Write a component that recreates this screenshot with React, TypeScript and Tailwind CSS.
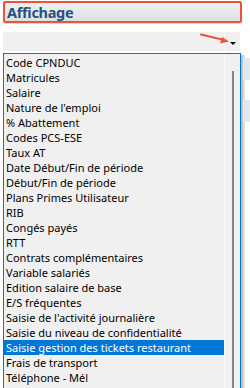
import React from "react";

const items = [
  "Code CPNDUC",
  "Matricules",
  "Salaire",
  "Nature de l'emploi",
  "% Abattement",
  "Codes PCS-ESE",
  "Taux AT",
  "Date Début/Fin de période",
  "Début/Fin de période",
  "Plans Primes Utilisateur",
  "RIB",
  "Congés payés",
  "RTT",
  "Contrats complémentaires",
  "Variable salariés",
  "Edition salaire de base",
  "E/S fréquentes",
  "Saisie de l'activité journalière",
  "Saisie du niveau de confidentialité",
  "Saisie gestion des tickets restaurant",
  "Frais de transport",
  "Téléphone - Mél",
];

export default function App() {
  return (
    <div
      className="relative w-[250px] h-[388px] overflow-hidden bg-white"
      style={{ fontFamily: '"Noto Sans", "Open Sans", sans-serif' }}
    >
      {/* background patches peeking at right */}
      <div className="absolute left-[243px] top-[58px] w-[7px] h-[22px] bg-[#e3e8ee]" />
      <div className="absolute left-[243px] top-[100px] w-[7px] h-[22px] bg-[#e3e8ee]" />

      <div className="flex flex-col pl-[3px] pt-[1px]">
        {/* Header */}
        <div className="w-[239px] h-[22px] border-2 border-[#e8553a] rounded-[2px] bg-gradient-to-b from-[#eef0f2] to-[#dde0e3] flex items-center pl-[2px] shadow-[0_1px_1px_rgba(0,0,0,0.15)]">
          <span className="text-[14.5px] font-bold text-[#24527f] leading-[18px] tracking-[-0.3px]">
            Affichage
          </span>
        </div>

        {/* Combo */}
        <div className="mt-[9px] w-[237px] h-[19px] bg-[#f0f0f0] flex">
          <div className="flex-1" />
          <div className="w-[16px] border-l border-[#fafafa] flex items-center justify-center pt-[3px]">
            <div className="w-0 h-0 border-l-[3px] border-r-[3px] border-t-[3px] border-l-transparent border-r-transparent border-t-black" />
          </div>
        </div>

        {/* List */}
        <div className="mt-[2px] flex">
          <div className="w-[238px] h-[340px] border border-[#0078d7] bg-[#f0f0f0] flex">
            <div className="w-[220px] pt-[1px] flex flex-col">
              {items.map((t, i) => {
                const sel = i === 19;
                return (
                  <div
                    key={t}
                    className={
                      "h-[15px] pl-[2px] text-[11px] leading-[15px] whitespace-nowrap " +
                      (sel ? "bg-[#0078d7] text-white" : "text-black")
                    }
                  >
                    {t}
                  </div>
                );
              })}
            </div>
            <div className="flex-1 border-l border-[#fbfbfb] flex justify-center pt-[17px]">
              <div className="w-[2px] h-full bg-[#858585] ml-[1px]" />
            </div>
          </div>
          <div className="w-[4px] h-[340px] mt-[2px] bg-gradient-to-r from-[#b4b4b4] to-[#ececec]" />
        </div>
      </div>

      {/* Red arrow annotation */}
      <svg
        className="absolute left-0 top-0"
        width="250"
        height="60"
        viewBox="0 0 250 60"
      >
        <line x1="201" y1="34.5" x2="224" y2="40" stroke="#e8553a" strokeWidth="2" strokeLinecap="round" />
        <polygon points="229,41.5 220,43.5 222,37" fill="#e8553a" />
      </svg>
    </div>
  );
}
